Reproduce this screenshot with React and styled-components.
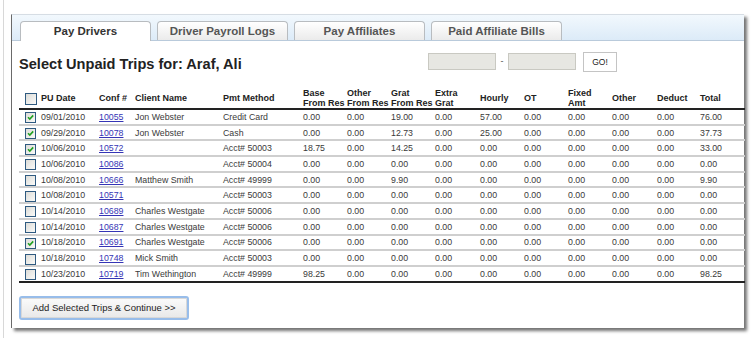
import React from 'react';
import styled, { createGlobalStyle } from 'styled-components';

const GlobalStyle = createGlobalStyle`
  html, body {
    margin: 0;
    padding: 0;
    background: #fff;
  }
  body {
    font-family: 'Liberation Sans', Arial, sans-serif;
    color: #333;
  }
`;

const Page = styled.div`
  margin-left: 3px;
  height: 338px;
  box-sizing: border-box;
  border-left: 1px solid #d8d8d8;
  padding: 14px 0 0 7px;
`;

const Card = styled.div`
  width: 733px;
  height: 314px;
  box-sizing: border-box;
  background: #fff;
  border-top: 1px solid #d6dde4;
  border-left: 1px solid #6a6a6a;
  box-shadow: 3px 3px 3px rgba(0, 0, 0, 0.55);
  display: flex;
  flex-direction: column;
`;

const TabBar = styled.div`
  height: 26px;
  box-sizing: border-box;
  padding: 7px 0 0 8px;
  display: flex;
  gap: 6px;
  align-items: flex-end;
  background: linear-gradient(#f2f8fd, #dcebf8);
  border-bottom: 1px solid #b9cadb;
`;

const Tab = styled.div`
  width: 131px;
  height: ${(p) => (p.$active ? '20px' : '19px')};
  margin-bottom: ${(p) => (p.$active ? '-1px' : '0')};
  box-sizing: border-box;
  border: 1px solid #b8bcc0;
  border-bottom: none;
  border-radius: 4px 4px 0 0;
  background: ${(p) => (p.$active ? '#fff' : 'linear-gradient(#ffffff, #ebebeb)')};
  display: flex;
  align-items: center;
  justify-content: center;
  padding-bottom: ${(p) => (p.$active ? '1px' : '0')};
  font-size: 11.5px;
  font-weight: bold;
  color: ${(p) => (p.$active ? '#333' : '#555')};
`;

const Body = styled.div`
  padding: 11px 0 0 7px;
  flex: 1;
  display: flex;
  flex-direction: column;
`;

const TopRow = styled.div`
  display: flex;
  align-items: flex-start;
  height: 35px;
`;

const Title = styled.h1`
  flex: 0 0 409px;
  margin: 4px 0 0;
  font-size: 14.6px;
  font-weight: bold;
  color: #222;
`;

const Filter = styled.div`
  display: flex;
  align-items: center;
  height: 18px;
`;

const DateInput = styled.input`
  width: 68px;
  height: 17px;
  box-sizing: border-box;
  border: 1px solid #c9c9c2;
  background: #e7e7e2;
  padding: 0;
`;

const Dash = styled.span`
  width: 12px;
  text-align: center;
  font-size: 9px;
  color: #555;
`;

const GoButton = styled.button`
  margin-left: 7px;
  margin-top: 2px;
  width: 34px;
  height: 20px;
  box-sizing: border-box;
  border: 1px solid #c4c4c4;
  background: #fff;
  font-family: 'Liberation Sans', Arial, sans-serif;
  font-size: 8.5px;
  color: #222;
  padding: 0;
`;

const Table = styled.table`
  width: 726px;
  table-layout: fixed;
  border-collapse: collapse;
  font-size: 8.8px;
`;

const Col = styled.col`
  width: ${(p) => p.$w}px;
`;

const Th = styled.th`
  height: 21px;
  padding: 0;
  text-align: left;
  vertical-align: middle;
  font-size: 9px;
  line-height: 10px;
  font-weight: bold;
  color: #222;
  border-bottom: 2px solid #222;
`;

const Tr = styled.tr`
  & > td {
    border-bottom: 2px solid ${(p) => (p.$last ? '#222' : '#cfcfcf')};
  }
`;

const Td = styled.td`
  height: 13.7px;
  padding: 0;
  white-space: nowrap;
  vertical-align: middle;
  color: #3a3a3a;
`;

const Link = styled.a`
  color: #3535b5;
  text-decoration: underline;
`;

const Box = styled.span`
  display: block;
  margin-left: 6px;
  width: ${(p) => p.$size}px;
  height: ${(p) => p.$size}px;
  box-sizing: border-box;
  border: 1px solid #2f5a80;
  background: linear-gradient(135deg, #dcdcd8, #fafaf8);
  position: relative;
  top: 1px;
`;

const Check = ({ checked, size = 11 }) => (
  <Box $size={size}>
    {checked && (
      <svg width={size - 2} height={size - 2} viewBox="0 0 9 9" style={{ position: 'absolute', left: 0, top: 0 }}>
        <path d="M2 4.2 L3.8 6 L7.2 2.4" fill="none" stroke="#21a121" strokeWidth="1.6" />
      </svg>
    )}
  </Box>
);

const Footer = styled.div`
  padding-top: 13px;
`;

const ActionButton = styled.button`
  width: 170px;
  height: 24px;
  box-sizing: border-box;
  border: 2px solid #98bdea;
  border-radius: 3px;
  box-shadow: inset 0 0 0 1px #d8d8d8;
  background: linear-gradient(#fbfbfb, #e8e8e8);
  font-family: 'Liberation Sans', Arial, sans-serif;
  font-size: 9.5px;
  color: #222;
  padding: 0;
`;

const widths = [22, 58, 36, 88, 80, 44, 44, 44, 45, 44, 44, 44, 45, 43, 45];

const headers = [
  'PU Date',
  'Conf #',
  'Client Name',
  'Pmt Method',
  ['Base', 'From Res'],
  ['Other', 'From Res'],
  ['Grat', 'From Res'],
  ['Extra', 'Grat'],
  'Hourly',
  'OT',
  ['Fixed', 'Amt'],
  'Other',
  'Deduct',
  'Total',
];

const z = '0.00';
const trips = [
  { on: true, date: '09/01/2010', conf: '10055', client: 'Jon Webster', pmt: 'Credit Card', v: [z, z, '19.00', z, '57.00', z, z, z, z, '76.00'] },
  { on: true, date: '09/29/2010', conf: '10078', client: 'Jon Webster', pmt: 'Cash', v: [z, z, '12.73', z, '25.00', z, z, z, z, '37.73'] },
  { on: true, date: '10/06/2010', conf: '10572', client: '', pmt: 'Acct# 50003', v: ['18.75', z, '14.25', z, z, z, z, z, z, '33.00'] },
  { on: false, date: '10/06/2010', conf: '10086', client: '', pmt: 'Acct# 50004', v: [z, z, z, z, z, z, z, z, z, z] },
  { on: false, date: '10/08/2010', conf: '10666', client: 'Matthew Smith', pmt: 'Acct# 49999', v: [z, z, '9.90', z, z, z, z, z, z, '9.90'] },
  { on: false, date: '10/08/2010', conf: '10571', client: '', pmt: 'Acct# 50003', v: [z, z, z, z, z, z, z, z, z, z] },
  { on: false, date: '10/14/2010', conf: '10689', client: 'Charles Westgate', pmt: 'Acct# 50006', v: [z, z, z, z, z, z, z, z, z, z] },
  { on: false, date: '10/14/2010', conf: '10687', client: 'Charles Westgate', pmt: 'Acct# 50006', v: [z, z, z, z, z, z, z, z, z, z] },
  { on: true, date: '10/18/2010', conf: '10691', client: 'Charles Westgate', pmt: 'Acct# 50006', v: [z, z, z, z, z, z, z, z, z, z] },
  { on: false, date: '10/18/2010', conf: '10748', client: 'Mick Smith', pmt: 'Acct# 50003', v: [z, z, z, z, z, z, z, z, z, z] },
  { on: false, date: '10/23/2010', conf: '10719', client: 'Tim Wethington', pmt: 'Acct# 49999', v: ['98.25', z, z, z, z, z, z, z, z, '98.25'] },
];

const tabs = ['Pay Drivers', 'Driver Payroll Logs', 'Pay Affiliates', 'Paid Affiliate Bills'];

export default function App() {
  return (
    <>
      <GlobalStyle />
      <Page>
        <Card>
          <TabBar>
            {tabs.map((t, i) => (
              <Tab key={t} $active={i === 0}>{t}</Tab>
            ))}
          </TabBar>
          <Body>
            <TopRow>
              <Title>Select Unpaid Trips for: Araf, Ali</Title>
              <Filter>
                <DateInput />
                <Dash>-</Dash>
                <DateInput />
                <GoButton>GO!</GoButton>
              </Filter>
            </TopRow>
            <Table>
              <colgroup>
                {widths.map((w, i) => (
                  <Col key={i} $w={w} />
                ))}
              </colgroup>
              <thead>
                <tr>
                  <Th><Check size={12} /></Th>
                  {headers.map((h, i) => (
                    <Th key={i}>
                      {Array.isArray(h) ? (
                        <>
                          {h[0]}
                          <br />
                          {h[1]}
                        </>
                      ) : (
                        h
                      )}
                    </Th>
                  ))}
                </tr>
              </thead>
              <tbody>
                {trips.map((t, i) => (
                  <Tr key={t.conf} $last={i === trips.length - 1}>
                    <Td><Check checked={t.on} /></Td>
                    <Td>{t.date}</Td>
                    <Td><Link href="#">{t.conf}</Link></Td>
                    <Td>{t.client}</Td>
                    <Td>{t.pmt}</Td>
                    {t.v.map((v, j) => (
                      <Td key={j}>{v}</Td>
                    ))}
                  </Tr>
                ))}
              </tbody>
            </Table>
            <Footer>
              <ActionButton>Add Selected Trips &amp; Continue &gt;&gt;</ActionButton>
            </Footer>
          </Body>
        </Card>
      </Page>
    </>
  );
}
